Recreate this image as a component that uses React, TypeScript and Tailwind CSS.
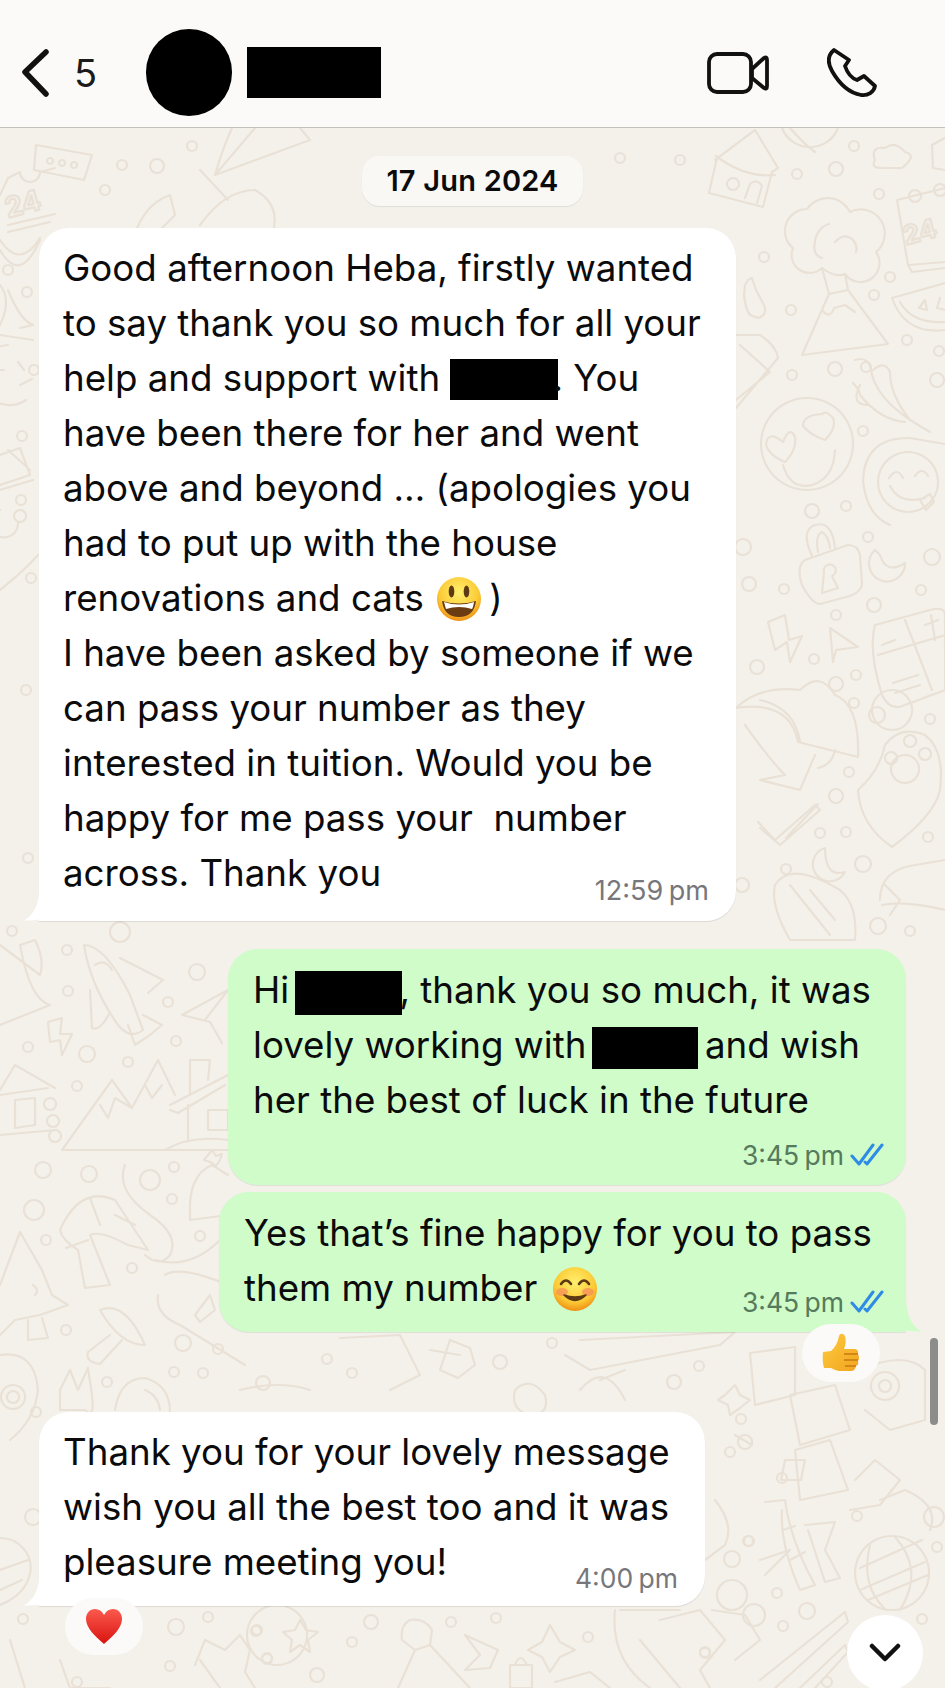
const circles: [number, number, number][] = [
  [854,146,5],[836,169,7],[797,174,5],[879,194,5],[764,257,5],[890,277,5],[874,295,5],[791,310,5],[907,340,5],[939,351,5],[835,369,7],[866,367,5],[792,375,5],[937,380,7],[863,431,5],[812,511,7],[846,506,5],
  [743,547,8],[749,584,7],[784,589,5],[868,537,5],[932,557,8],[921,590,5],[874,605,7],[836,615,5],[814,659,5],[757,667,7],[856,675,5],[836,684,7],[854,703,5],[877,715,8],[930,719,5],[849,772,5],[836,796,7],[928,837,5],[820,833,5],[846,832,5],[786,869,5],[863,864,8],[742,885,7],[878,926,8],[910,931,5],
  [12,931,5],[120,932,10],[67,950,5],[197,972,8],[68,991,5],[168,1002,5],[176,1041,5],[28,1047,5],[87,1054,8],[128,1062,5],[77,1086,5],[43,1170,8],[89,1174,8],[150,1180,10],[174,1167,5],[172,1199,5],[34,1210,10],[46,1240,5],[200,1236,5],[132,1268,5],[66,1330,5],[183,1343,8],[218,1349,5],[174,1372,5],[203,1373,5],[107,1382,5],[36,1412,5],
  [857,1516,5],[934,1517,10],[749,1541,5],[732,1559,8],[937,1547,5],[777,1593,5],[732,1595,15],[754,1615,11],[807,1611,8],[783,1626,5],[922,1619,5],[705,1653,5],[827,1682,5],
  [23,1619,5],[176,1627,8],[208,1617,5],[256,1631,5],[267,1659,5],[170,1666,5],[77,1682,5],[33,1517,8],
  [327,1359,5],[352,1373,5],[500,1362,7],[552,1343,5],[263,1383,7],[674,1382,7],[699,1366,5],[741,1419,5],[730,1452,5],[782,1478,5],[748,1541,5],[371,1622,7],[451,1622,5],[496,1618,5],[257,1630,5],[352,1642,5],[588,1637,5],[267,1658,5],[317,1675,7],[705,1652,5],
  [192,146,5],[157,166,7],[122,165,5],[105,190,5],[680,160,5],[620,158,5],[8,270,5],[27,292,5],[34,370,5],[22,436,5],[21,500,5],[31,578,5],[26,690,5],[28,858,5],
];

const doodles: string[] = [
  // top strip
  "M36 145 L92 155 L84 180 L34 170 Z M50 158 a3 3 0 1 0 .1 0 M62 160 a3 3 0 1 0 .1 0 M74 162 a3 3 0 1 0 .1 0",
  "M215 175 Q222 150 232 128 M215 175 L255 128 M215 175 L310 140 L300 128",
  "M130 250 Q140 205 170 195 L175 215 L155 235 L175 250 M200 225 Q225 190 255 190 Q282 205 272 235 M228 200 L200 170",
  "M715 160 L755 130 L778 168 L772 172 L763 207 L709 193 L717 158 M716 156 Q745 178 775 175 M733 178 a6 6 0 1 0 .1 0 M745 198 L750 184 Q757 178 762 186 L757 203",
  "M782 128 a30 30 0 0 0 56 0 M790 128 Q805 145 815 152",
  "M875 160 Q870 146 885 148 Q895 140 905 152 Q918 155 902 168 L882 168 Q870 168 875 160Z",
  "M932 145 L945 138 M932 145 L933 168 L945 170",
  // volcano
  "M807 209 A25 25 0 0 1 850 212 A24 24 0 0 1 876 252 A18 18 0 0 1 845 274 Q835 278 822 268 A18 18 0 0 1 793 248 A22 22 0 0 1 807 209Z M829 224 A20 20 0 0 0 815 242 Q812 255 822 258 M835 242 Q845 232 853 240 Q858 246 856 252",
  "M822 268 L829 294 L802 355 L888 344 L848 290 L845 274 M829 294 L848 290 M822 310 Q830 320 834 308 L845 305 L855 312",
  // calendars
  "M897 200 L908 265 L945 262 M908 265 L912 272 L945 268 M897 200 L945 188 M915 190 a6 6 0 1 0 .1 0 M940 184 a6 6 0 1 0 .1 0",
  "M8 178 L20 172 a6 6 0 1 0 20 0 L55 168 M0 195 L8 178 M8 225 L55 214 M8 232 L50 222",
  // watermelon
  "M892 298 L945 283 M892 298 Q905 335 945 330 M900 302 Q912 324 945 322 M925 300 l-6 8 l8 2 Z M940 298 l-3 10 l8 2",
  "M0 240 Q20 270 40 238 M0 250 Q20 285 40 240",
  // bottle
  "M745 285 L748 280 L752 278 L756 290 L764 305 Q768 315 758 318 L750 315 Q746 310 744 296 Z",
  // phone
  "M736 335 L760 335 Q776 345 778 358 L736 408 M740 345 L770 372 L736 400",
  // chilli
  "M855 360 Q870 355 872 375 Q880 405 930 432 L910 420 Q890 395 890 372 Q885 360 873 370 M853 383 Q860 390 860 395 Q880 420 905 422 M868 405 Q850 405 860 385",
  "M0 285 Q12 300 0 325 M8 290 Q20 320 33 325 L20 328 M0 335 L33 340",
  // heart smile
  "M807 398 a46 46 0 1 0 .1 0 M783 442 Q768 430 766 444 Q768 455 785 462 Q797 450 795 437 Q790 425 783 442 Z M822 414 Q803 415 803 426 Q810 435 825 440 Q837 428 833 418 Q826 410 822 414 Z M783 465 Q790 490 812 485 Q834 478 835 450",
  // tongue smile
  "M908 452 a30 30 0 1 0 .1 0 M889 478 Q897 466 903 478 M915 476 Q922 466 928 476 M890 486 Q900 505 925 498 M863 480 Q865 437 910 438 L945 444 M863 480 Q866 515 890 525 M920 500 l10 -6 l4 8 l-8 8 Z",
  "M8 345 a30 30 0 1 0 18 55 M0 370 h4 M18 362 l6 8 M20 385 l12 -6",
  // lock
  "M805 560 L848 545 Q858 545 860 555 L862 585 Q860 592 850 596 L820 604 Q812 604 802 585 Q796 566 805 560 Z M812 556 Q800 530 815 525 Q832 520 835 548 M818 552 Q815 535 822 532 Q828 535 830 548 M824 572 a6 6 0 1 1 8 4 l6 12 l-16 5 Z",
  "M875 550 a18 18 0 1 0 30 13 Q886 575 880 555 Z",
  // bolt and send
  "M768 622 L785 615 L789 640 L802 636 L790 662 L787 642 L775 650 Z",
  "M830 628 L858 647 L836 650 L833 662 Z",
  // calculator
  "M875 625 L930 610 Q945 606 945 615 L945 690 L905 705 Q890 712 882 695 Q868 650 875 625 Z M905 620 L932 690 M878 655 L945 635 M882 645 L895 640 M925 625 L938 620 M931 615 L935 640 M892 690 a20 20 0 1 0 .1 0 M893 683 L918 675 M895 693 L920 685",
  "M0 455 L20 448 L30 475 L0 485 M0 490 L33 480 M8 450 L30 470",
  // helmets
  "M736 708 Q760 685 800 690 Q820 670 835 695 Q860 705 858 757 L798 742 Q790 700 736 708 Z M800 742 Q795 708 760 700 M745 725 Q770 760 785 775 L760 780 L800 790 L815 755 M835 750 Q832 765 818 768",
  // paw
  "M858 790 Q880 770 885 745 Q900 725 925 735 Q945 750 940 790 Q935 815 892 847 Q860 825 858 790 M891 752 a6 6 0 1 0 .1 0 M910 735 a6 6 0 1 0 .1 0 M925 748 a6 6 0 1 0 .1 0 M905 755 a14 14 0 1 0 .1 0",
  "M0 510 a14 14 0 1 0 18 12 M20 510 a6 6 0 1 0 .1 0 M0 590 Q25 570 38 555",
  // checks
  "M758 822 L775 840 L815 805 L820 810 L780 845 L760 828 M786 838 L818 804",
  "M825 848 a17 17 0 1 0 20 24 Q825 878 825 848 Z",
  // taco and football
  "M880 900 Q880 870 915 865 L945 860 M882 905 Q905 900 945 910 M885 885 L900 900 L890 915",
  "M775 885 Q790 860 840 890 Q858 905 855 940 L790 940 Q770 905 775 885 M790 885 L830 935 M810 890 L835 920",
  // rocket
  "M84 945 Q105 945 130 995 L143 1030 Q130 1040 118 1025 Q90 985 84 945 Z M95 965 Q105 958 112 970 M120 958 L163 980 L148 993 M90 990 L92 1028 Q100 1032 110 1012 M128 1025 L135 1045 L150 1035 L162 1025 L143 1015",
  // plane and bolt
  "M228 990 L182 1015 L210 1022 L222 1043 M228 990 L205 1020",
  "M48 1022 L62 1018 L60 1034 L72 1034 L62 1055 L60 1040 L50 1042 Z",
  // cabin
  "M0 1090 L15 1065 L55 1088 M0 1095 L48 1088 M0 1135 L55 1130 M15 1100 L35 1098 L35 1125 L15 1128 Z M50 1098 a6 6 0 1 0 .1 0 M53 1115 a6 6 0 1 0 .1 0 M55 1130 a6 6 0 1 0 .1 0",
  // mountains and snow house
  "M62 1150 L112 1080 L132 1108 L158 1060 L175 1095 M62 1150 L228 1150 M100 1105 L108 1118 L115 1098 L132 1108 M145 1085 L152 1098 L162 1085",
  "M170 1105 L228 1075 M170 1110 L178 1113 L225 1085 M190 1095 L190 1060 L210 1060 L208 1080 M188 1105 L188 1140 M208 1110 h20 v20 h-20 Z M165 1150 Q190 1135 228 1140",
  "M0 945 L40 975 Q45 960 35 940 L20 945 Q30 1000 50 1005 L0 1025",
  // hat and shrimp
  "M190 1215 Q188 1175 212 1165 L228 1175 M190 1200 L190 1220 L228 1215 M212 1150 l4 6 l6 -2 l-2 6 l-4 6 l-6 -4 l-6 -2 Z",
  "M60 1230 Q80 1185 115 1200 L148 1250 L128 1245 Q100 1230 90 1235 L110 1285 L85 1288 L78 1250 Q62 1240 60 1230 Z M66 1248 L88 1240 M90 1198 L100 1225 M115 1215 L135 1225",
  "M125 1165 Q115 1190 150 1215 Q180 1235 170 1255 Q160 1268 145 1255 M155 1260 Q190 1270 220 1240",
  // tree
  "M20 1232 L42 1270 L52 1295 L68 1305 L40 1315 L15 1320 L0 1335 M20 1232 L0 1285 M28 1320 L28 1340 L48 1338 L42 1318 M33 1285 Q40 1290 35 1295",
  // mushroom
  "M100 1310 Q125 1300 145 1345 Q120 1345 100 1310 Z M110 1335 L88 1352 Q85 1362 100 1364 L122 1340",
  // skateboard
  "M165 1275 Q180 1265 228 1285 M158 1295 Q155 1315 180 1325 L245 1365 M195 1315 L210 1295 L215 1310 L200 1322 Z",
  // egg target
  "M0 1355 Q35 1350 38 1390 Q35 1420 10 1440 M13 1385 a12 12 0 1 0 .1 0 M13 1391 a6 6 0 1 0 .1 0",
  // peace hand and orb
  "M60 1390 L70 1370 L78 1390 L88 1368 L92 1395 Q95 1420 85 1410 L60 1410 Z",
  "M115 1410 Q120 1378 145 1378 Q170 1385 170 1412 M145 1390 Q158 1395 160 1410",
  // strip around the reaction
  "M240 1390 Q280 1380 310 1390 M340 1338 L400 1335 L420 1375 L390 1390",
  "M430 1350 L460 1355 M450 1340 L470 1348 L475 1365 L458 1378 L440 1370 Z",
  "M580 1340 L735 1332 L720 1345 L590 1370 L565 1355",
  "M750 1353 L795 1347 L795 1395 L755 1405 Z",
  "M790 1395 L835 1385 L850 1430 L800 1445 Z",
  "M725 1395 L735 1385 L740 1395 L750 1400 L740 1408 L730 1415 L728 1405 L718 1400 Z",
  "M860 1370 Q905 1350 925 1370 L925 1420 L890 1430 L865 1410 M885 1372 a14 14 0 1 0 .1 0 M885 1380 a6 6 0 1 0 .1 0",
  "M515 1390 Q530 1375 545 1395 Q550 1415 530 1415 Q510 1410 515 1390 Z M580 1390 Q605 1360 625 1400 M600 1380 L625 1370",
  "M735 1435 L752 1445 M745 1435 a7 7 0 1 0 .1 0 M795 1450 L830 1440 L848 1490 L800 1500 Z M855 1480 L875 1460 L900 1480 L880 1505 L850 1510",
  "M785 1460 h20 l-4 20 h-20 Z M880 1500 L905 1490 Q940 1505 930 1530",
  "M715 1500 Q735 1525 725 1545 L705 1560",
  // bamboo
  "M765 1502 L785 1500 Q790 1540 815 1585 L800 1590 Q780 1545 782 1510 M783 1530 L795 1526 M790 1560 L805 1552 M805 1525 L835 1522 L825 1550 L840 1578 L825 1582 L808 1530 M760 1560 L790 1550 L765 1575",
  // globe
  "M892 1536 a37 37 0 1 0 .1 0 M860 1568 L922 1540 M860 1590 L925 1562 M868 1600 L928 1575 M870 1545 Q860 1585 885 1609 M895 1537 Q925 1570 900 1610",
  "M0 1538 a30 30 0 0 1 30 36 Q25 1595 0 1605 M0 1570 L28 1560 M0 1590 L22 1580",
  // chopsticks
  "M760 1680 L845 1612 L848 1622 L775 1688 M800 1688 L845 1645 L848 1652 L815 1688",
  // bottom area
  "M277 1605 a30 30 0 1 0 .1 0 M300 1620 L306 1630 L318 1632 L308 1640 L310 1652 L300 1645 L290 1652 L292 1640 L283 1632 L295 1630 Z",
  "M410 1620 Q400 1625 402 1640 L415 1650 L430 1645 L432 1630 Q425 1618 410 1620 Z M415 1650 L398 1688 M430 1645 L470 1688",
  "M465 1635 L480 1655 L465 1670 L490 1668 L498 1650 Z",
  "M550 1625 L560 1642 L575 1650 L560 1657 L550 1672 L542 1657 L528 1650 L542 1642 Z",
  "M510 1665 h22 v23 h-22 Z M515 1665 q5 -14 12 0",
  "M615 1610 Q610 1660 650 1688 M640 1640 L680 1688 M620 1610 L680 1610",
  "M660 1620 L700 1610 L725 1640 L700 1670 L710 1688",
  "M712 1610 L745 1615 L760 1640 L735 1660",
  "M555 1682 L590 1672 L610 1688",
  "M60 1660 L70 1688 L110 1688 M10 1640 L25 1688 M200 1660 L220 1688",
  "M195 1665 L205 1640 L225 1650 L240 1635 L250 1650 L245 1672 L255 1688",
];

function Wallpaper() {
  return (
    <svg
      className="absolute left-0 top-0 w-[945px] h-[1688px]"
      viewBox="0 0 945 1688"
      fill="none"
      stroke="#e9e1d6"
      strokeWidth="2.2"
      strokeLinecap="round"
      strokeLinejoin="round"
    >
      {doodles.map((d, i) => (
        <path key={i} d={d} />
      ))}
      {circles.map(([x, y, r], i) => (
        <circle key={i} cx={x} cy={y} r={r} />
      ))}
      <text x="906" y="245" fontFamily="Inter" fontSize="26" fontWeight="700" transform="rotate(-15 906 245)">24</text>
      <text x="8" y="218" fontFamily="Inter" fontSize="28" fontWeight="700" transform="rotate(-15 8 218)">24</text>
    </svg>
  );
}

function Redacted({ className }: { className: string }) {
  return <span className={`inline-block bg-black align-middle ${className}`} />;
}

function SmileEmoji() {
  return (
    <svg viewBox="0 0 46 46" className="inline-block w-[46px] h-[46px] align-[-11px] ml-[2px] mr-[7px]">
      <defs>
        <radialGradient id="smile-a" cx="50%" cy="35%" r="65%">
          <stop offset="0%" stopColor="#fff06e" />
          <stop offset="70%" stopColor="#fbc934" />
          <stop offset="100%" stopColor="#ef8f14" />
        </radialGradient>
      </defs>
      <circle cx="23" cy="23" r="22" fill="url(#smile-a)" />
      <ellipse cx="15.5" cy="15.5" rx="2.8" ry="6" fill="#5b3a14" />
      <ellipse cx="30.5" cy="15.5" rx="2.8" ry="6" fill="#5b3a14" />
      <path d="M6 25 Q23 30 40 25 Q38 41 23 41 Q8 41 6 25 Z" fill="#6b3b12" />
      <path d="M8 26 Q23 31 38 26 Q37 32 36 33 Q23 29 10 33 Q9 30 8 26 Z" fill="#fff" />
    </svg>
  );
}

function BlushEmoji() {
  return (
    <svg viewBox="0 0 46 46" className="inline-block w-[46px] h-[46px] align-[-11px] ml-[4px]">
      <defs>
        <radialGradient id="blush-a" cx="50%" cy="35%" r="65%">
          <stop offset="0%" stopColor="#fff06e" />
          <stop offset="70%" stopColor="#fbc934" />
          <stop offset="100%" stopColor="#ef8f14" />
        </radialGradient>
      </defs>
      <circle cx="23" cy="23" r="22" fill="url(#blush-a)" />
      <ellipse cx="10" cy="26" rx="6" ry="4" fill="#f78a5c" opacity="0.7" />
      <ellipse cx="36" cy="26" rx="6" ry="4" fill="#f78a5c" opacity="0.7" />
      <path d="M9 18 Q14 11 19 18 M27 18 Q32 11 37 18" fill="none" stroke="#5b3a14" strokeWidth="2.6" strokeLinecap="round" />
      <path d="M12 29 Q23 40 34 29 Q23 33 12 29 Z" fill="#5b3a14" stroke="#5b3a14" strokeWidth="1.5" strokeLinejoin="round" />
    </svg>
  );
}

function Checks() {
  return (
    <svg viewBox="0 0 34 24" className="w-[34px] h-[24px]" fill="none" stroke="#2f8ce6" strokeWidth="3" strokeLinecap="round" strokeLinejoin="round">
      <path d="M2 13 L9 21 L23 2" />
      <path d="M15 19 L17 21 L32 2" />
    </svg>
  );
}

function LeftTail() {
  return (
    <svg viewBox="0 0 44 30" className="absolute left-[-15px] bottom-0 w-[44px] h-[30px]" fill="#fff">
      <path d="M15 0 Q15 20 0 29.5 Q14 30 26 26 Q34 30 44 30 L44 0 Z" />
    </svg>
  );
}

function RightTail() {
  return (
    <svg viewBox="0 0 44 34" className="absolute right-[-15px] bottom-0 w-[44px] h-[34px]" fill="#cffcc9">
      <path d="M29 0 Q29 24 44 33.5 Q30 34 18 29 Q10 34 0 34 L0 0 Z" />
    </svg>
  );
}

export default function App() {
  return (
    <div className="relative w-[945px] h-[1688px] overflow-hidden bg-[#f4f1eb] font-['Inter',sans-serif] text-[36.7px] leading-[55px] text-[#0b0b0b]">
      <Wallpaper />

      <header className="relative flex h-[128px] items-center border-b border-[#c4c0ba] bg-[#fbfaf8] pt-[18px]">
        <svg viewBox="0 0 30 48" className="ml-[21px] h-[48px] w-[30px]" fill="none" stroke="#111" strokeWidth="5.5" strokeLinecap="round" strokeLinejoin="round">
          <path d="M25 3 L4 23 L25 45" />
        </svg>
        <span className="ml-[23px] text-[38px] leading-none text-[#1a1a1a]">5</span>
        <div className="ml-[49px] h-[87px] w-[86px] rounded-full bg-black" />
        <div className="ml-[15px] h-[51px] w-[134px] bg-black" />
        <svg viewBox="0 0 62 42" className="ml-[326px] h-[42px] w-[62px]" fill="none" stroke="#111" strokeWidth="3.8" strokeLinejoin="round">
          <rect x="2" y="2" width="42" height="38" rx="8" />
          <path d="M45 17 L57 6 Q60 4 60 8 L60 34 Q60 38 57 36 L45 26 Z" />
        </svg>
        <svg viewBox="0 0 50 50" className="ml-[58px] h-[50px] w-[50px]" fill="none" stroke="#111" strokeWidth="3.8" strokeLinejoin="round">
          <path d="M7 2 C1 7 0 14 5 23 C13 37 23 45 34 47 C41 48 47 44 48 38 L37 28 L30 32 C24 30 20 24 18 18 L22 12 Z" />
        </svg>
      </header>

      <main className="relative flex flex-col">
        <div className="mt-[28px] self-center rounded-[18px] bg-[#f9f8f5] px-[24px] py-[8px] text-[29px] font-semibold leading-[34px] tracking-[0.2px] shadow-[0_1px_1px_rgba(0,0,0,0.08)]">
          17 Jun 2024
        </div>

        <div className="relative ml-[39px] mt-[22px] h-[693px] w-[697px] rounded-[30px] rounded-bl-none bg-white pl-[24px] pt-[12px] shadow-[0_1px_1px_rgba(0,0,0,0.1)]">
          <LeftTail />
          <p className="relative">
            Good afternoon Heba, firstly wanted
            <br />
            to say thank you so much for all your
            <br />
            help and support with <Redacted className="-mt-[3px] mr-[-6px] h-[41px] w-[108px]" />. You
            <br />
            have been there for her and went
            <br />
            above and beyond … (apologies you
            <br />
            had to put up with the house
            <br />
            renovations and cats <SmileEmoji />)
            <br />
            I have been asked by someone if we
            <br />
            can pass your number as they
            <br />
            interested in tuition. Would you be
            <br />
            happy for me pass your&nbsp; number
            <br />
            across. Thank you
          </p>
          <span className="absolute bottom-[15px] right-[27px] text-[27px] leading-[30px] text-[#77777b] [word-spacing:-2px]">12:59 pm</span>
        </div>

        <div className="relative ml-[228px] mt-[28px] h-[236px] w-[678px] rounded-[30px] bg-[#cffcc9] pl-[25px] pt-[13px] shadow-[0_1px_1px_rgba(0,0,0,0.08)]">
          <p>
            Hi <Redacted className="-ml-[4px] mr-[-3px] h-[44px] w-[107px]" />, thank you so much, it was
            <br />
            lovely working with <Redacted className="-ml-[5px] mr-[-3px] h-[42px] w-[106px]" /> and wish
            <br />
            her the best of luck in the future
          </p>
          <div className="absolute bottom-[15px] right-[22px] flex items-center gap-[6px]">
            <span className="text-[26.5px] leading-[30px] text-[#557a5c] [word-spacing:-2px]">3:45 pm</span>
            <Checks />
          </div>
        </div>

        <div className="relative ml-[219px] mt-[7px] h-[140px] w-[687px] rounded-[30px] rounded-br-none bg-[#cffcc9] pl-[25px] pt-[13px] shadow-[0_1px_1px_rgba(0,0,0,0.08)]">
          <RightTail />
          <p className="relative">
            Yes that’s fine happy for you to pass
            <br />
            them my number <BlushEmoji />
          </p>
          <div className="absolute bottom-[15px] right-[22px] flex items-center gap-[6px]">
            <span className="text-[26.5px] leading-[30px] text-[#557a5c] [word-spacing:-2px]">3:45 pm</span>
            <Checks />
          </div>
          <div className="absolute bottom-[-50px] right-[26px] flex h-[58px] w-[78px] items-center justify-center rounded-[29px] bg-[#fbfaf8]">
            <svg viewBox="0 0 38 40" className="h-[40px] w-[38px]">
              <defs>
                <linearGradient id="thumb-a" x1="0" y1="0" x2="1" y2="1">
                  <stop offset="0%" stopColor="#fdcb3e" />
                  <stop offset="100%" stopColor="#f2a41f" />
                </linearGradient>
              </defs>
              <path d="M1 19 L9 18 Q15 13 17 3 Q18 0 21 1 Q25 3 23 13 L22 16 L33 16 Q37 17 36 21 Q38 25 36 28 Q37 32 34 33 Q33 38 29 38 L17 38 Q12 37 9 35 L2 35 Q0 28 1 19 Z" fill="url(#thumb-a)" />
              <path d="M22 21 H36 M22 27 H36 M23 33 H34" stroke="#c97a12" strokeWidth="1.4" fill="none" />
            </svg>
          </div>
        </div>

        <div className="relative ml-[39px] mt-[80px] h-[194px] w-[666px] rounded-[30px] rounded-bl-none bg-white pl-[24px] pt-[12px] shadow-[0_1px_1px_rgba(0,0,0,0.1)]">
          <LeftTail />
          <p className="relative">
            Thank you for your lovely message
            <br />
            wish you all the best too and it was
            <br />
            pleasure meeting you!
          </p>
          <span className="absolute bottom-[13px] right-[27px] text-[26.5px] leading-[30px] text-[#77777b] [word-spacing:-2px]">4:00 pm</span>
          <div className="absolute bottom-[-49px] left-[26px] flex h-[57px] w-[78px] items-center justify-center rounded-[28px] bg-[#fbfaf8]">
            <svg viewBox="0 0 38 38" className="h-[38px] w-[38px]">
              <defs>
                <linearGradient id="heart-a" x1="0" y1="0" x2="0" y2="1">
                  <stop offset="0%" stopColor="#fb5a4e" />
                  <stop offset="100%" stopColor="#d8130f" />
                </linearGradient>
              </defs>
              <path d="M19 36 C10 28 1 20 1 11 C1 5 5 1 10 1 C14 1 17 3 19 7 C21 3 24 1 28 1 C33 1 37 5 37 11 C37 20 28 28 19 36 Z" fill="url(#heart-a)" />
            </svg>
          </div>
        </div>
      </main>

      <div className="absolute right-[7px] top-[1338px] h-[87px] w-[8px] rounded-full bg-[#8c8c8a]" />
      <button className="absolute left-[847px] top-[1615px] flex h-[76px] w-[76px] items-center justify-center rounded-full bg-white">
        <svg viewBox="0 0 32 20" className="h-[20px] w-[32px]" fill="none" stroke="#111" strokeWidth="4.5" strokeLinecap="round" strokeLinejoin="round">
          <path d="M3 3 L16 16 L29 3" />
        </svg>
      </button>
    </div>
  );
}
